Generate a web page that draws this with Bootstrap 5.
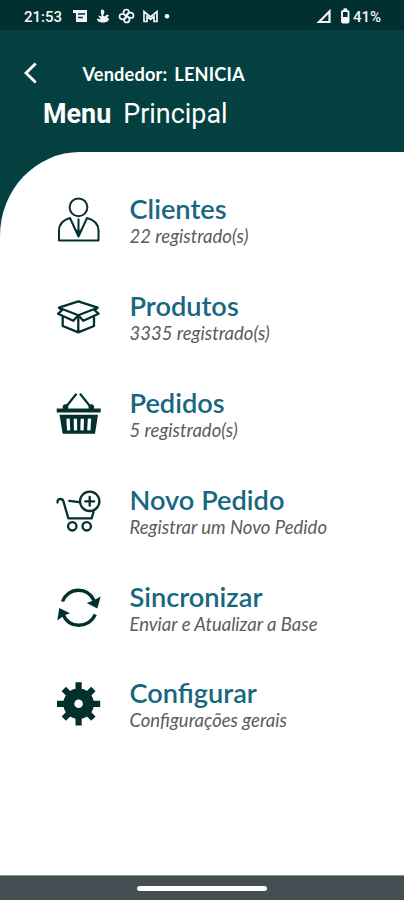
<!DOCTYPE html>
<html lang="pt-BR">
<head>
<meta charset="utf-8">
<meta name="viewport" content="width=device-width, initial-scale=1">
<title>Menu Principal</title>
<link href="https://cdn.jsdelivr.net/npm/bootstrap@5.3.0/dist/css/bootstrap.min.css" rel="stylesheet">
<style>
  body { font-family: Lato, sans-serif; background: #04403f; }
  .screen { height: 900px; }
  .status { height: 30px; background: #022f30; font: 500 15px/30px Roboto, sans-serif; padding: 3px 23px 0 24px; color: #f3f7f7; }
  .top-area { height: 122px; background: #04403f; }
  .seller-row { height: 32px; margin-top: 27px; padding-left: 23px; }
  .seller { font-size: 18.2px; margin-left: 44.500px; line-height: 32px; padding-top: 2px; letter-spacing: .15px; word-spacing: 2.500px; }
  .heading { font: 400 26.9px/32px Roboto, sans-serif; padding-left: 43px; margin-top: 9px; }
  .heading strong { font-weight: 700; margin-right: 12px; }
  .sheet { border-top-left-radius: 80px 84px; padding: 20px 0 0 54px; }
  .entry { height: 96.8px; gap: 27.500px; color: inherit; }
  .entry svg { width: 48px; height: 48px; color: #03302f; }
  .entry-text { padding-top: 2px; }
  .entry h2 { font-size: 27.2px; line-height: 30px; font-weight: 600; color: #17687f; }
  .entry p { font-size: 18.5px; line-height: 24px; font-style: italic; color: #5c5c5c; }
  .gesture { height: 25px; background: #454e52; border-top: 1px solid #8a9294; }
  .gesture span { width: 130px; height: 5px; background: #fff; }
</style>
</head>
<body>
<div class="screen d-flex flex-column overflow-hidden">
  <div class="status d-flex align-items-center flex-shrink-0">
    <span>21:53</span>
    <svg class="ms-1" width="108" height="22" viewBox="66 5.500 108 22" fill="none" stroke="#f3f7f7">
      <path d="M73 9.500h14v12H76v-9h-3z" fill="#f3f7f7" stroke="none"/>
      <path d="M78 13.500h7M78 17h5" stroke="#022f30" stroke-width="1.300"/>
      <path d="M102 9c2 0 3 2 2 4l-1 2 2 1c1-2 3-2 4-1l-2 2 2 1c0 3-3 4-6 4s-6-1-6-4l4 1-3-4 4 1c-1-2-2-7 0-7z" fill="#f3f7f7" stroke="none"/>
      <path d="M126.500 15.500c-5-2-3-6.500 0-6.500s3 4 0 6.500zM126.500 15.500c1-5 7-4 7-.5s-4 3-7 .5zM126.500 15.500c5 2 3 6.500 0 6.500s-3-4 0-6.500zM126.500 15.500c-1 5-7 4-7 .5s4-3 7-.5z" stroke-width="1.700"/>
      <path d="M144 21v-10l6.500 5.500L157 11v10h-3v-5l-3.500 3-3.500-3v5z" stroke-width="1.700"/>
      <circle cx="167" cy="15.700" r="2.300" fill="#f3f7f7" stroke="none"/>
    </svg>
    <svg class="ms-auto" width="38" height="20" viewBox="315 6.500 38 20" fill="none" stroke="#f3f7f7">
      <path d="M319 21.500L329.500 11v10.500z" stroke-width="2.200"/>
      <rect x="342" y="10.500" width="6.500" height="11.500" rx="1" stroke-width="1.900"/>
      <path d="M343.500 8.800h3.500" stroke-width="2"/><path d="M342 16.500h6.500V22H342z" fill="#f3f7f7" stroke="none"/>
    </svg>
    <span>41%</span>
  </div>

  <header class="top-area text-white flex-shrink-0 overflow-hidden">
    <div class="seller-row d-flex align-items-center">
      <svg width="15" height="22" viewBox="0 0 15 22" fill="none" stroke="#fff" stroke-width="2.800"><path d="M12.700 1.500L3 11l9.700 9.500"/></svg>
      <span class="seller fw-bold text-nowrap">Vendedor: LENICIA</span>
    </div>
    <h1 class="heading mb-0 text-nowrap"><strong>Menu</strong><span>Principal</span></h1>
  </header>

  <main class="sheet bg-white flex-grow-1">
    <a class="entry d-flex align-items-center text-decoration-none" href="#">
      <svg viewBox="0 0 48 48" fill="none" stroke="currentColor" stroke-width="2" stroke-linejoin="round">
        <circle cx="24.500" cy="11.300" r="8.900"/>
        <path d="M16 22C9 24 5 28 5 34.500V44.500h39.500v-10C44.500 28 40.500 24 33 22L24.500 40.500z"/>
        <path d="M24.500 22.500v17"/><path d="M22 33l2.500 6 2.500-6-2.500 2z" fill="currentColor" stroke="none"/>
      </svg>
      <div class="entry-text"><h2 class="mb-0">Clientes</h2><p class="mb-0">22 registrado(s)</p></div>
    </a>
    <a class="entry d-flex align-items-center text-decoration-none" href="#">
      <svg viewBox="0 0 48 48" fill="none" stroke="currentColor" stroke-width="2.300" stroke-linejoin="round">
        <path d="M24.300 8.300L5 14.700l19.300 7.500 19.300-7.500z"/>
        <path d="M5 14.700l3 2.500-4 3.600 15.300 7 5-5.600 5 5.600 15.300-7-4-3.600 3-2.500"/>
        <path d="M8.700 23.500v9.500l15.600 6.400L40 33v-9.500M24.300 22v17"/>
      </svg>
      <div class="entry-text"><h2 class="mb-0">Produtos</h2><p class="mb-0">3335 registrado(s)</p></div>
    </a>
    <a class="entry d-flex align-items-center text-decoration-none" href="#">
      <svg viewBox="0 0 48 48" fill="none" stroke="currentColor" stroke-width="2.200">
        <path d="M22.500 3.700L11 18M26 3.700L37.500 18"/>
        <g fill="currentColor" stroke="none"><circle cx="11.500" cy="17" r="2.800"/><circle cx="37.300" cy="17" r="2.800"/><path d="M2.700 18.400h44v4.200h-44zM5.500 24.800h38.500L41 43.800H8.700z"/></g>
        <path d="M14 28.700l.7 11.700M21.300 28.700l.3 11.700M28.300 28.700l-.3 11.700M35.500 28.700l-.7 11.700" stroke="#fff" stroke-width="3.300"/>
      </svg>
      <div class="entry-text"><h2 class="mb-0">Pedidos</h2><p class="mb-0">5 registrado(s)</p></div>
    </a>
    <a class="entry d-flex align-items-center text-decoration-none" href="#">
      <svg viewBox="0 0 48 48" fill="none" stroke="currentColor" stroke-width="2.300" stroke-linecap="round" stroke-linejoin="round">
        <path d="M3.500 15.500c0-3 .8-3.500 3-3.500s2.500.6 3 2.500l4.800 16.800h23.400l1.800-6.300M15.300 13.800l9.700 1.300"/>
        <circle cx="35.700" cy="14.300" r="9.700"/><path d="M35.700 9.800v9M31.200 14.300h9"/>
        <circle cx="18.300" cy="39.300" r="4.200"/><circle cx="32.700" cy="39.300" r="4.200"/>
      </svg>
      <div class="entry-text"><h2 class="mb-0">Novo Pedido</h2><p class="mb-0">Registrar um Novo Pedido</p></div>
    </a>
    <a class="entry d-flex align-items-center text-decoration-none" href="#">
      <svg viewBox="0 0 48 48" fill="none" stroke="currentColor" stroke-width="3.400">
        <path d="M8.500 17.500C11 11 17 6.300 24.300 6.300c7 0 12.500 3.500 15.700 10.200M41.300 30.500C38.500 37 32 41.300 24.800 41.300 17.500 41.300 12 37.500 9 30.500"/>
        <path d="M46.700 12.500l-3.400 12-10.600-5.500 6.800-2.500zM3.300 36.500l2-12.400L16 29.300l-5.500 2z" fill="currentColor" stroke="none"/>
      </svg>
      <div class="entry-text"><h2 class="mb-0">Sincronizar</h2><p class="mb-0">Enviar e Atualizar a Base</p></div>
    </a>
    <a class="entry d-flex align-items-center text-decoration-none" href="#">
      <svg viewBox="0 0 48 48" fill="none" stroke="currentColor">
        <circle cx="24.600" cy="23.800" r="9.800" stroke-width="11"/>
        <path d="M24.600 2.200v9M24.600 36.400v9M3 23.800h9M37.200 23.800h9M9.800 9l6 6M33.400 32.600l6 6M39.400 9l-6 6M15.800 32.600l-6 6" stroke-width="6.200"/>
      </svg>
      <div class="entry-text"><h2 class="mb-0">Configurar</h2><p class="mb-0">Configurações gerais</p></div>
    </a>
  </main>

  <footer class="gesture d-flex justify-content-center align-items-center flex-shrink-0"><span class="rounded-pill"></span></footer>
</div>
<script src="https://cdn.jsdelivr.net/npm/bootstrap@5.3.0/dist/js/bootstrap.bundle.min.js"></script>
</body>
</html>
